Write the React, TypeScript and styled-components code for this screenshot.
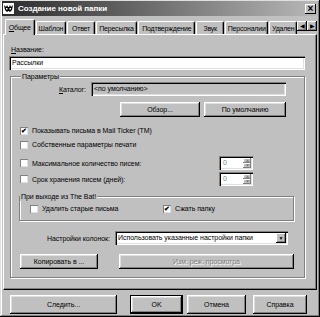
import styled, { createGlobalStyle } from "styled-components";

const GlobalStyle = createGlobalStyle`
  html, body {
    margin: 0;
    padding: 0;
    background: #c0c0c0;
  }
  body {
    font-family: "Liberation Sans", Arial, sans-serif;
    font-size: 7px;
    letter-spacing: -0.05px;
    color: #000;
  }
`;

const tabs = [
  { label: "Общее", width: 30 },
  { label: "Шаблон", width: 31 },
  { label: "Ответ", width: 28 },
  { label: "Пересылка", width: 42 },
  { label: "Подтверждение", width: 58 },
  { label: "Звук", width: 28 },
  { label: "Персоналии", width: 44 },
  { label: "Удален", width: 28 },
];

const BatIcon = () => (
  <svg width="11" height="11" viewBox="0 0 11 11">
    <rect x="0" y="0" width="11" height="11" fill="#fff" />
    <path
      d="M1 2 L3 4 L4 2 L5 4 L6 4 L7 2 L8 4 L10 2 L9 7 L7 9 L5.5 8 L4 9 L2 7 Z"
      fill="#000"
    />
    <rect x="3" y="5" width="1.5" height="1.5" fill="#fff" />
    <rect x="6.5" y="5" width="1.5" height="1.5" fill="#fff" />
  </svg>
);

const App: React.FC = () => {
  return (
    <>
      <GlobalStyle />
      <Window>
        <TitleBar>
          <BatIcon />
          <TitleText>Создание новой папки</TitleText>
          <CloseButton>×</CloseButton>
        </TitleBar>

        <TabStrip>
          {tabs.map((t, i) => (
            <Tab key={t.label} active={i === 0} style={{ width: t.width }}>
              {i === 0 ? <u>О</u> : null}
              {i === 0 ? "бщее" : t.label}
            </Tab>
          ))}
          <TabArrows>
            <ArrowButton>◀</ArrowButton>
            <ArrowButton>▶</ArrowButton>
          </TabArrows>
        </TabStrip>

        <Panel>
          <FieldLabel>
            <u>Н</u>азвание:
          </FieldLabel>
          <TextField>Рассылки</TextField>

          <Group>
            <Legend>Параметры</Legend>

            <Row top={1} height={14}>
              <RightLabel width={66}>
                <u>К</u>аталог:
              </RightLabel>
              <ReadOnlyField>&lt;по умолчанию&gt;</ReadOnlyField>
            </Row>

            <Row top={4} height={18} indent={100}>
              <Button width={80}>Обзор...</Button>
              <Button width={82}>По умолчанию</Button>
            </Row>

            <Row top={8} height={9}>
              <CheckBox checked>✔</CheckBox>
              <CheckLabel>Показывать письма в Mail Ticker (TM)</CheckLabel>
            </Row>

            <Row top={5} height={9}>
              <CheckBox />
              <CheckLabel>Собственные параметры печати</CheckLabel>
            </Row>

            <Row top={7} height={14}>
              <CheckBox />
              <CheckLabel width={183}>Максимальное количество писем:</CheckLabel>
              <Spin>
                <SpinValue>0</SpinValue>
                <SpinButtons>
                  <SpinArrow>▴</SpinArrow>
                  <SpinArrow>▾</SpinArrow>
                </SpinButtons>
              </Spin>
            </Row>

            <Row top={2} height={14}>
              <CheckBox />
              <CheckLabel width={183}>Срок хранения писем (дней):</CheckLabel>
              <Spin>
                <SpinValue>0</SpinValue>
                <SpinButtons>
                  <SpinArrow>▴</SpinArrow>
                  <SpinArrow>▾</SpinArrow>
                </SpinButtons>
              </Spin>
            </Row>

            <SubGroup>
              <SubLegend>При выходе из The Bat!</SubLegend>
              <Row top={3} height={9} indent={10}>
                <CheckBox />
                <CheckLabel width={117}>Удалить старые письма</CheckLabel>
                <CheckBox checked>✔</CheckBox>
                <CheckLabel>Сжать папку</CheckLabel>
              </Row>
            </SubGroup>

            <Row top={10} height={14}>
              <RightLabel width={90}>Настройки колонок:</RightLabel>
              <Select>
                <SelectValue>Использовать указанные настройки папки</SelectValue>
                <DropButton>▼</DropButton>
              </Select>
            </Row>

            <Row top={9} height={14}>
              <Button width={78}>Копировать в ...</Button>
              <Spacer width={13} />
              <Button width={175} disabled>
                Изм. реж. просмотра
              </Button>
            </Row>
          </Group>
        </Panel>

        <Footer>
          <Button width={107} height={19}>
            Следить...
          </Button>
          <Spacer width={13} />
          <Button width={53} height={19} isDefault>
            OK
          </Button>
          <Spacer width={4} />
          <Button width={59} height={19}>
            Отмена
          </Button>
          <Spacer width={7} />
          <Button width={54} height={19}>
            Справка
          </Button>
        </Footer>
      </Window>
    </>
  );
};

export default App;

const Window = styled.div`
  box-sizing: border-box;
  width: 320px;
  height: 317px;
  padding: 1px 2px 2px 2px;
  background: #c0c0c0;
  box-shadow: inset -1px -1px #000, inset 1px 1px #dfdfdf,
    inset -2px -2px #808080, inset 2px 2px #fff;
  display: flex;
  flex-direction: column;
`;

const TitleBar = styled.div`
  height: 15px;
  display: flex;
  align-items: center;
  padding: 0 2px 0 1px;
  gap: 4px;
  background: linear-gradient(90deg, #2b2b2b 0%, #6a6a6a 45%, #b8b8b8 100%);
`;

const TitleText = styled.div`
  flex: 1;
  color: #fff;
  font-weight: bold;
  font-size: 8px;
  white-space: nowrap;
`;

const CloseButton = styled.div`
  box-sizing: border-box;
  width: 11px;
  height: 10px;
  background: #c0c0c0;
  box-shadow: inset -1px -1px #000, inset 1px 1px #fff;
  font-size: 10px;
  line-height: 9px;
  font-weight: bold;
  text-align: center;
`;

const TabStrip = styled.div`
  height: 16px;
  margin-top: 2px;
  padding-left: 3px;
  display: flex;
  align-items: flex-end;
  position: relative;
  z-index: 1;
`;

const Tab = styled.div<{ active?: boolean }>`
  box-sizing: border-box;
  height: ${(p) => (p.active ? "16px" : "13px")};
  margin-bottom: ${(p) => (p.active ? "-1px" : "0")};
  margin-left: ${(p) => (p.active ? "0" : "1px")};
  padding-top: ${(p) => (p.active ? "3px" : "2px")};
  background: #c0c0c0;
  border-top: 1px solid #fff;
  border-left: 1px solid #fff;
  border-right: 1px solid #000;
  border-radius: 2px 2px 0 0;
  box-shadow: inset -1px 0 #808080;
  text-align: center;
  white-space: nowrap;
  overflow: hidden;
  line-height: 9px;
  letter-spacing: -0.2px;
`;

const TabArrows = styled.div`
  display: flex;
  margin-left: auto;
  margin-bottom: 3px;
  margin-right: 1px;
`;

const ArrowButton = styled.div`
  box-sizing: border-box;
  width: 10px;
  height: 10px;
  background: #c0c0c0;
  box-shadow: inset -1px -1px #000, inset 1px 1px #fff,
    inset -2px -2px #808080;
  font-size: 6px;
  line-height: 10px;
  text-align: center;
`;

const Panel = styled.div`
  box-sizing: border-box;
  height: 256px;
  margin: 0 1px 0 1px;
  padding: 9px 11px 0 5px;
  border-top: 1px solid #fff;
  border-left: 1px solid #fff;
  border-right: 1px solid #000;
  border-bottom: 1px solid #000;
  box-shadow: inset -1px -1px #808080;
`;

const FieldLabel = styled.div`
  height: 11px;
  line-height: 11px;
  padding-left: 2px;
`;

const TextField = styled.div`
  box-sizing: border-box;
  height: 14px;
  margin-top: 1px;
  padding: 0 3px;
  line-height: 14px;
  background: #fff;
  box-shadow: inset 1px 1px #808080, inset 2px 2px #000,
    inset -1px -1px #fff, inset -2px -2px #dfdfdf;
`;

const Group = styled.fieldset`
  box-sizing: border-box;
  height: 206px;
  margin: 2px 0 0 1px;
  padding: 0 10px 0 9px;
  border: 1px solid #808080;
  box-shadow: 1px 1px 0 #fff, inset 1px 1px 0 #fff;
  min-width: 0;
`;

const Legend = styled.legend`
  padding: 0 1px;
  margin-left: 1px;
  line-height: 9px;
  background: #c0c0c0;
`;

const SubGroup = styled.fieldset`
  box-sizing: border-box;
  height: 29px;
  margin: 6px 0 0 -1px;
  padding: 0;
  border: 1px solid #808080;
  box-shadow: 1px 1px 0 #fff, inset 1px 1px 0 #fff;
  min-width: 0;
`;

const SubLegend = styled.legend`
  padding: 0 1px;
  line-height: 9px;
  background: #c0c0c0;
`;

const Row = styled.div<{ top: number; height: number; indent?: number }>`
  display: flex;
  align-items: center;
  height: ${(p) => p.height}px;
  margin-top: ${(p) => p.top}px;
  padding-left: ${(p) => p.indent || 0}px;
  gap: 4px;
`;

const RightLabel = styled.div<{ width: number }>`
  width: ${(p) => p.width}px;
  flex: 0 0 auto;
  text-align: right;
  white-space: nowrap;
  margin-right: 1px;
`;

const ReadOnlyField = styled.div`
  box-sizing: border-box;
  width: 195px;
  height: 14px;
  padding: 0 3px;
  line-height: 14px;
  background: #c0c0c0;
  box-shadow: inset 1px 1px #808080, inset 2px 2px #000,
    inset -1px -1px #fff, inset -2px -2px #dfdfdf;
`;

const Button = styled.div<{
  width: number;
  height?: number;
  disabled?: boolean;
  isDefault?: boolean;
}>`
  box-sizing: border-box;
  flex: 0 0 auto;
  width: ${(p) => p.width}px;
  height: ${(p) => p.height || 15}px;
  display: flex;
  align-items: center;
  justify-content: center;
  background: #c0c0c0;
  color: ${(p) => (p.disabled ? "#808080" : "#000")};
  text-shadow: ${(p) => (p.disabled ? "1px 1px #fff" : "none")};
  white-space: nowrap;
  border: ${(p) => (p.isDefault ? "1px solid #000" : "none")};
  box-shadow: inset -1px -1px #000, inset 1px 1px #fff,
    inset -2px -2px #808080, inset 2px 2px #dfdfdf;
`;

const CheckBox = styled.div<{ checked?: boolean }>`
  box-sizing: border-box;
  flex: 0 0 auto;
  width: 8px;
  height: 8px;
  background: #fff;
  box-shadow: inset 1px 1px #808080, inset -1px -1px #dfdfdf;
  font-size: 7px;
  line-height: 8px;
  text-align: center;
  font-weight: bold;
  color: #000;
`;

const CheckLabel = styled.div<{ width?: number }>`
  flex: 0 0 auto;
  width: ${(p) => (p.width ? `${p.width}px` : "auto")};
  white-space: nowrap;
`;

const Spin = styled.div`
  box-sizing: border-box;
  width: 34px;
  height: 14px;
  display: flex;
  padding: 2px;
  background: #fff;
  box-shadow: inset 1px 1px #808080, inset 2px 2px #000,
    inset -1px -1px #fff, inset -2px -2px #dfdfdf;
`;

const SpinValue = styled.div`
  flex: 1;
  padding-left: 2px;
  line-height: 10px;
  color: #808080;
`;

const SpinButtons = styled.div`
  width: 8px;
  display: flex;
  flex-direction: column;
`;

const SpinArrow = styled.div`
  flex: 1;
  background: #c0c0c0;
  box-shadow: inset -1px -1px #808080, inset 1px 1px #fff;
  font-size: 6px;
  line-height: 5px;
  text-align: center;
  color: #808080;
`;

const Select = styled.div`
  box-sizing: border-box;
  width: 173px;
  height: 14px;
  display: flex;
  padding: 2px;
  background: #fff;
  box-shadow: inset 1px 1px #808080, inset 2px 2px #000,
    inset -1px -1px #fff, inset -2px -2px #dfdfdf;
`;

const SelectValue = styled.div`
  flex: 1;
  padding-left: 1px;
  line-height: 10px;
  white-space: nowrap;
  overflow: hidden;
`;

const DropButton = styled.div`
  width: 10px;
  background: #c0c0c0;
  box-shadow: inset -1px -1px #000, inset 1px 1px #fff,
    inset -2px -2px #808080;
  font-size: 5px;
  line-height: 10px;
  text-align: center;
`;

const Spacer = styled.div<{ width: number }>`
  flex: 0 0 auto;
  width: ${(p) => p.width}px;
`;

const Footer = styled.div`
  display: flex;
  align-items: center;
  margin-top: 5px;
  padding-left: 8px;
`;
